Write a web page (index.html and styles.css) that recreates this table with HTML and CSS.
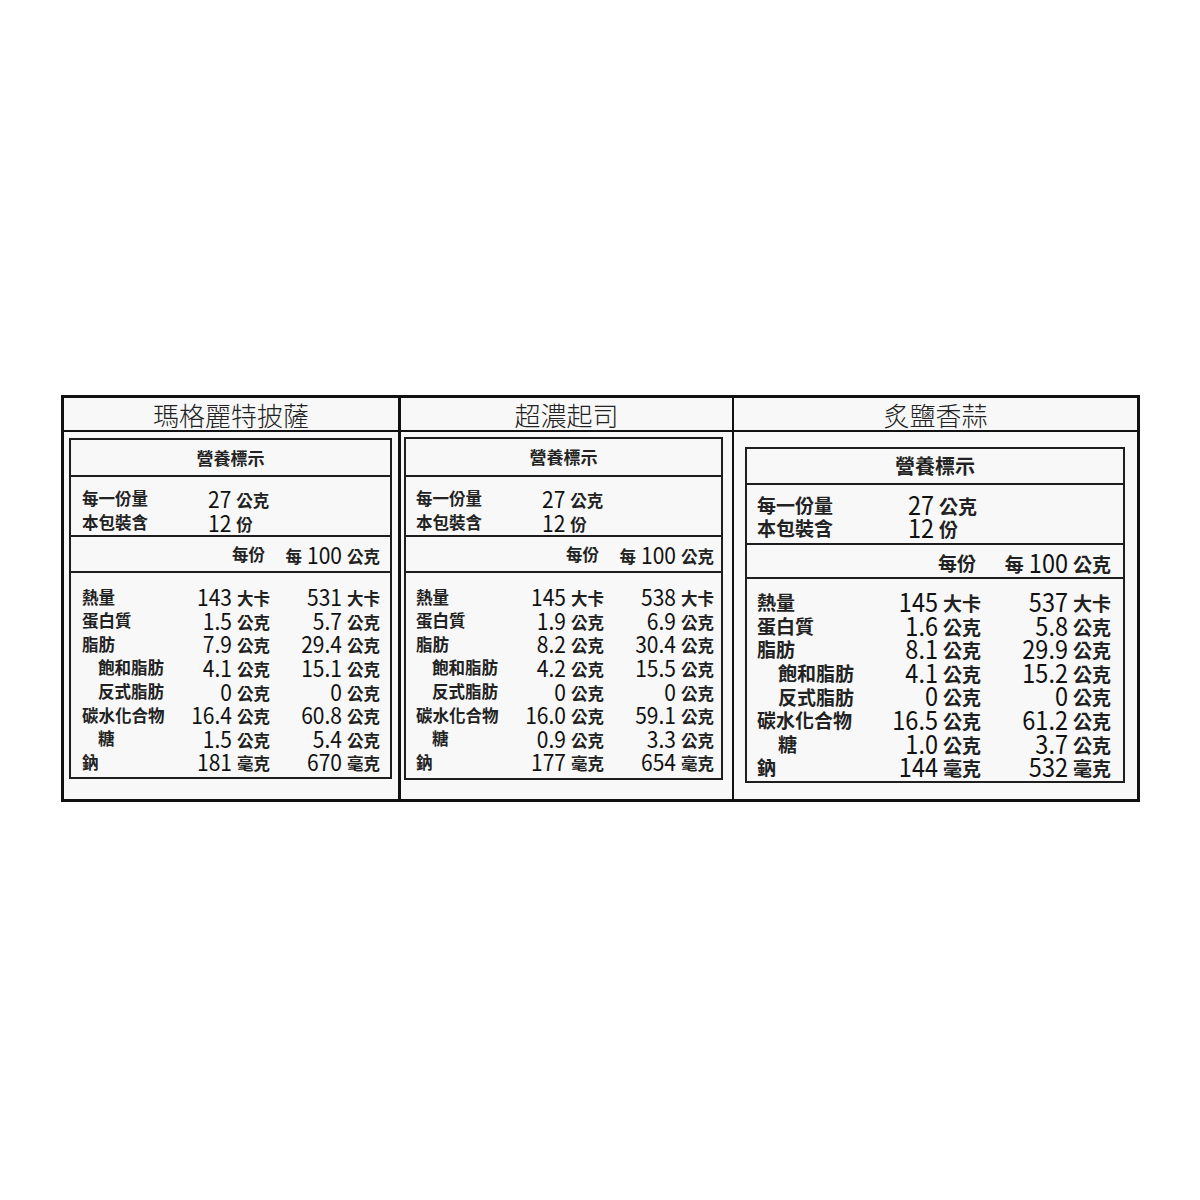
FILE: index.html
```html
<!DOCTYPE html>
<html lang="zh-Hant">
<head>
<meta charset="utf-8">
<title>營養標示</title>
<link rel="stylesheet" href="styles.css">
</head>
<body>
<div class="sheet">
  <section class="panel p1 sm">
    <h2 class="title">瑪格麗特披薩</h2>
    <div class="body">
      <div class="box">
        <div class="head">營養標示</div>
        <div class="serving">
          <span class="k">每一份量</span><span class="sv"><span class="n">27</span><span class="u">公克</span></span>
          <span class="k">本包裝含</span><span class="sv"><span class="n">12</span><span class="u">份</span></span>
        </div>
        <div class="cols"><span></span><span class="c1 u">每份</span><span class="c2"><span class="u">每</span><span class="n">100</span><span class="u">公克</span></span></div>
        <div class="data">
          <span class="k">熱量</span><span class="v"><span class="n">143</span><span class="u">大卡</span></span><span class="v"><span class="n">531</span><span class="u">大卡</span></span>
          <span class="k">蛋白質</span><span class="v"><span class="n">1.5</span><span class="u">公克</span></span><span class="v"><span class="n">5.7</span><span class="u">公克</span></span>
          <span class="k">脂肪</span><span class="v"><span class="n">7.9</span><span class="u">公克</span></span><span class="v"><span class="n">29.4</span><span class="u">公克</span></span>
          <span class="k in">飽和脂肪</span><span class="v"><span class="n">4.1</span><span class="u">公克</span></span><span class="v"><span class="n">15.1</span><span class="u">公克</span></span>
          <span class="k in">反式脂肪</span><span class="v"><span class="n">0</span><span class="u">公克</span></span><span class="v"><span class="n">0</span><span class="u">公克</span></span>
          <span class="k">碳水化合物</span><span class="v"><span class="n">16.4</span><span class="u">公克</span></span><span class="v"><span class="n">60.8</span><span class="u">公克</span></span>
          <span class="k in">糖</span><span class="v"><span class="n">1.5</span><span class="u">公克</span></span><span class="v"><span class="n">5.4</span><span class="u">公克</span></span>
          <span class="k">鈉</span><span class="v"><span class="n">181</span><span class="u">毫克</span></span><span class="v"><span class="n">670</span><span class="u">毫克</span></span>
        </div>
      </div>
    </div>
  </section>
  <section class="panel p2 sm">
    <h2 class="title">超濃起司</h2>
    <div class="body">
      <div class="box">
        <div class="head">營養標示</div>
        <div class="serving">
          <span class="k">每一份量</span><span class="sv"><span class="n">27</span><span class="u">公克</span></span>
          <span class="k">本包裝含</span><span class="sv"><span class="n">12</span><span class="u">份</span></span>
        </div>
        <div class="cols"><span></span><span class="c1 u">每份</span><span class="c2"><span class="u">每</span><span class="n">100</span><span class="u">公克</span></span></div>
        <div class="data">
          <span class="k">熱量</span><span class="v"><span class="n">145</span><span class="u">大卡</span></span><span class="v"><span class="n">538</span><span class="u">大卡</span></span>
          <span class="k">蛋白質</span><span class="v"><span class="n">1.9</span><span class="u">公克</span></span><span class="v"><span class="n">6.9</span><span class="u">公克</span></span>
          <span class="k">脂肪</span><span class="v"><span class="n">8.2</span><span class="u">公克</span></span><span class="v"><span class="n">30.4</span><span class="u">公克</span></span>
          <span class="k in">飽和脂肪</span><span class="v"><span class="n">4.2</span><span class="u">公克</span></span><span class="v"><span class="n">15.5</span><span class="u">公克</span></span>
          <span class="k in">反式脂肪</span><span class="v"><span class="n">0</span><span class="u">公克</span></span><span class="v"><span class="n">0</span><span class="u">公克</span></span>
          <span class="k">碳水化合物</span><span class="v"><span class="n">16.0</span><span class="u">公克</span></span><span class="v"><span class="n">59.1</span><span class="u">公克</span></span>
          <span class="k in">糖</span><span class="v"><span class="n">0.9</span><span class="u">公克</span></span><span class="v"><span class="n">3.3</span><span class="u">公克</span></span>
          <span class="k">鈉</span><span class="v"><span class="n">177</span><span class="u">毫克</span></span><span class="v"><span class="n">654</span><span class="u">毫克</span></span>
        </div>
      </div>
    </div>
  </section>
  <section class="panel p3 lg">
    <h2 class="title">炙鹽香蒜</h2>
    <div class="body">
      <div class="box">
        <div class="head">營養標示</div>
        <div class="serving">
          <span class="k">每一份量</span><span class="sv"><span class="n">27</span><span class="u">公克</span></span>
          <span class="k">本包裝含</span><span class="sv"><span class="n">12</span><span class="u">份</span></span>
        </div>
        <div class="cols"><span></span><span class="c1 u">每份</span><span class="c2"><span class="u">每</span><span class="n">100</span><span class="u">公克</span></span></div>
        <div class="data">
          <span class="k">熱量</span><span class="v"><span class="n">145</span><span class="u">大卡</span></span><span class="v"><span class="n">537</span><span class="u">大卡</span></span>
          <span class="k">蛋白質</span><span class="v"><span class="n">1.6</span><span class="u">公克</span></span><span class="v"><span class="n">5.8</span><span class="u">公克</span></span>
          <span class="k">脂肪</span><span class="v"><span class="n">8.1</span><span class="u">公克</span></span><span class="v"><span class="n">29.9</span><span class="u">公克</span></span>
          <span class="k in">飽和脂肪</span><span class="v"><span class="n">4.1</span><span class="u">公克</span></span><span class="v"><span class="n">15.2</span><span class="u">公克</span></span>
          <span class="k in">反式脂肪</span><span class="v"><span class="n">0</span><span class="u">公克</span></span><span class="v"><span class="n">0</span><span class="u">公克</span></span>
          <span class="k">碳水化合物</span><span class="v"><span class="n">16.5</span><span class="u">公克</span></span><span class="v"><span class="n">61.2</span><span class="u">公克</span></span>
          <span class="k in">糖</span><span class="v"><span class="n">1.0</span><span class="u">公克</span></span><span class="v"><span class="n">3.7</span><span class="u">公克</span></span>
          <span class="k">鈉</span><span class="v"><span class="n">144</span><span class="u">毫克</span></span><span class="v"><span class="n">532</span><span class="u">毫克</span></span>
        </div>
      </div>
    </div>
  </section>
</div>
</body>
</html>
```
FILE: styles.css
```css
html, body {
  margin: 0;
  padding: 0;
  background: #ffffff;
}
body {
  font-family: "Noto Sans CJK TC", "Noto Sans CJK SC", sans-serif;
  color: #151515;
}
.sheet {
  margin: 395px 0 0 61px;
  width: 1079px;
  height: 407px;
  box-sizing: border-box;
  border: 3px solid #111;
  background: #f8f8f8;
  display: grid;
  grid-template-columns: 334px 334px 405px;
}
.panel {
  display: flex;
  flex-direction: column;
  min-width: 0;
}
.p2 { border-left: 3px solid #111; }
.p3 { border-left: 2px solid #111; }

.title {
  margin: 0;
  height: 32px;
  border-bottom: 2px solid #111;
  font-size: 26px;
  font-weight: 300;
  line-height: 33px;
  text-align: center;
  color: #222;
}

/* size sets */
.sm {
  --cjk: 16.5px;
  --num: 21px;
  --head: 17px;
  --labw: 78px;
  --colw: 110px;
  --servw: 126px;
  --indent: 16px;
  --row: 23.6px;
  --hh: 35px;
  --sh: 60px;
  --ch: 36px;
  --dh: 204px;
  --dpt: 12px;
  --spt: 9px;
  --srow: 24px;
}
.lg {
  --cjk: 19px;
  --num: 23.5px;
  --head: 20px;
  --labw: 94px;
  --colw: 130px;
  --servw: 151px;
  --indent: 21px;
  --row: 23.6px;
  --hh: 34px;
  --sh: 60px;
  --ch: 34px;
  --dh: 202px;
  --dpt: 11px;
  --spt: 8px;
  --srow: 23px;
}

.p1 .body { padding: 6px 6px 0 5px; --padl: 11px; --padr: 10px; }
.p2 .body { padding: 5px 9px 0 3px; --padl: 10px; --padr: 8px; }
.p2 { --hh: 36px; --dh: 205px; }
.p3 .body { padding: 15px 12px 0 11px; --padl: 10px; --padr: 12px; }

.box {
  border: 2px solid #1e1e1e;
}
.head {
  height: var(--hh);
  line-height: var(--hh);
  text-align: center;
  font-size: var(--head);
  font-weight: 700;
  border-bottom: 2px solid #1e1e1e;
  color: #222;
}
.serving {
  height: var(--sh);
  box-sizing: border-box;
  padding: var(--spt) var(--padr) 0 var(--padl);
  display: grid;
  grid-template-columns: var(--servw) auto;
  justify-content: start;
  grid-auto-rows: var(--srow);
  align-items: center;
  border-bottom: 2px solid #1e1e1e;
  white-space: nowrap;
}
.cols {
  height: var(--ch);
  box-sizing: border-box;
  padding: 0 var(--padr) 0 var(--padl);
  display: grid;
  grid-template-columns: var(--labw) var(--colw) var(--colw);
  align-items: center;
  border-bottom: 2px solid #1e1e1e;
  white-space: nowrap;
}
.cols .c1 { text-align: right; padding-right: 5px; }
.cols .c2 { text-align: right; }
.data {
  height: var(--dh);
  box-sizing: border-box;
  padding: var(--dpt) var(--padr) 0 var(--padl);
  display: grid;
  grid-template-columns: var(--labw) var(--colw) var(--colw);
  grid-auto-rows: var(--row);
  align-items: center;
  white-space: nowrap;
}
.k {
  font-size: var(--cjk);
  font-weight: 700;
  line-height: 1;
  color: #222;
}
.k.in { padding-left: var(--indent); }
.v {
  text-align: right;
  line-height: 1;
}
.sv {
  text-align: left;
  line-height: 1;
}
.n {
  display: inline-block;
  font-size: var(--num);
  font-weight: 400;
  margin-right: 5px;
  transform: scaleY(1.1);
  color: #111;
}
.u {
  font-size: var(--cjk);
  font-weight: 700;
  color: #222;
}
.cols .u + .n { margin-left: 5px; }
```
